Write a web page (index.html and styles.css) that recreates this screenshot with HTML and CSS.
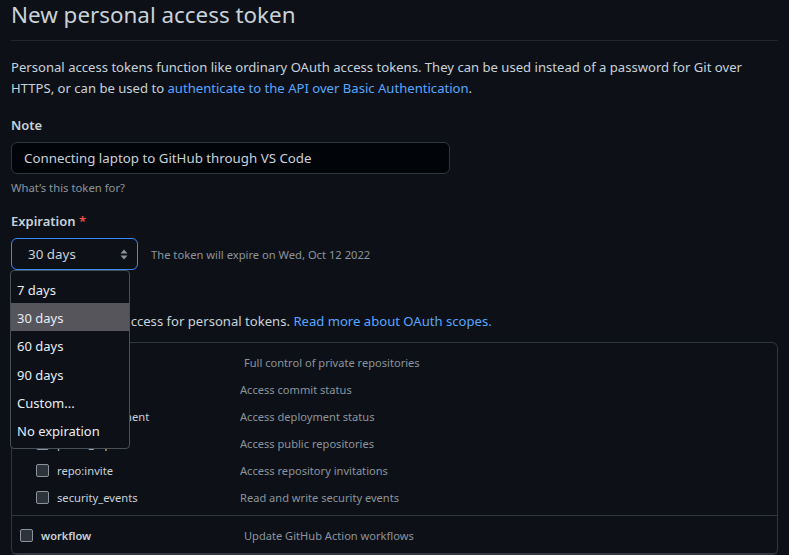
FILE: index.html
```html
<!DOCTYPE html>
<html lang="en">
<head>
<meta charset="utf-8">
<title>New personal access token</title>
<link rel="stylesheet" href="styles.css">
</head>
<body>
<main class="page">
  <div class="subhead">
    <h1 class="subhead-title">New personal access token</h1>
  </div>
  <p class="intro">Personal access tokens function like ordinary OAuth access tokens. They can be used instead of a password for Git over HTTPS, or can be used to <a class="link" href="#">authenticate to the API over Basic Authentication</a>.</p>

  <div class="field">
    <label class="field-label">Note</label>
    <div class="text-input">Connecting laptop to GitHub through VS Code</div>
    <p class="hint">What’s this token for?</p>
  </div>

  <div class="field field-expiry">
    <label class="field-label">Expiration <span class="req">*</span></label>
    <div class="expiry-row">
      <div class="select-wrap">
        <div class="select">
          <span>30 days</span>
          <svg class="select-arrows" width="8" height="11" viewBox="0 0 8 11"><path d="M4 0.5 L7.5 4.5 H0.5 Z M0.5 6.5 H7.5 L4 10.5 Z" fill="#8b949e"/></svg>
        </div>
        <ul class="dropdown">
          <li class="option">7 days</li>
          <li class="option is-active">30 days</li>
          <li class="option">60 days</li>
          <li class="option">90 days</li>
          <li class="option">Custom...</li>
          <li class="option">No expiration</li>
        </ul>
      </div>
      <span class="expiry-note">The token will expire on Wed, Oct 12 2022</span>
    </div>
  </div>

  <section class="scopes">
    <h3 class="scopes-title">Select scopes</h3>
    <p class="scopes-desc">Scopes define the access for personal tokens. <a class="link" href="#">Read more about OAuth scopes.</a></p>
    <div class="scope-box">
      <div class="scope-group">
        <div class="scope-row">
          <span class="scope-name"><span class="checkbox"></span><b>repo</b></span>
          <span class="scope-desc">Full control of private repositories</span>
        </div>
        <div class="scope-row sub">
          <span class="scope-name"><span class="checkbox"></span>repo:status</span>
          <span class="scope-desc">Access commit status</span>
        </div>
        <div class="scope-row sub">
          <span class="scope-name"><span class="checkbox"></span>repo_deployment</span>
          <span class="scope-desc">Access deployment status</span>
        </div>
        <div class="scope-row sub">
          <span class="scope-name"><span class="checkbox"></span>public_repo</span>
          <span class="scope-desc">Access public repositories</span>
        </div>
        <div class="scope-row sub">
          <span class="scope-name"><span class="checkbox"></span>repo:invite</span>
          <span class="scope-desc">Access repository invitations</span>
        </div>
        <div class="scope-row sub">
          <span class="scope-name"><span class="checkbox"></span>security_events</span>
          <span class="scope-desc">Read and write security events</span>
        </div>
      </div>
      <div class="scope-group">
        <div class="scope-row">
          <span class="scope-name"><span class="checkbox"></span><b>workflow</b></span>
          <span class="scope-desc">Update GitHub Action workflows</span>
        </div>
      </div>
    </div>
  </section>
</main>
</body>
</html>
```
FILE: styles.css
```css
* { box-sizing: border-box; }

html, body {
  margin: 0;
  padding: 0;
  background: #0d1117;
}

body {
  color: #c9d1d9;
  font-family: "Noto Sans", "Open Sans", sans-serif;
  font-size: 13.1px;
  line-height: 21px;
  overflow: hidden;
  height: 555px;
}

.page {
  padding: 0 11px;
}

.subhead {
  padding-bottom: 10px;
  border-bottom: 1px solid #21262d;
}

.subhead-title {
  margin: 0;
  font-size: 22.4px;
  line-height: 30px;
  font-weight: 400;
  color: #c9d1d9;
}

.intro {
  margin: 16px 0 16px;
}

.link {
  color: #58a6ff;
  text-decoration: none;
}

.field-label {
  display: block;
  font-weight: 600;
  font-size: 13px;
  margin-bottom: 6px;
}

.req {
  color: #f85149;
}

.text-input {
  width: 439px;
  height: 32px;
  padding: 0 12px;
  display: flex;
  align-items: center;
  background: #010409;
  border: 1px solid #30363d;
  border-radius: 6px;
  color: #c9d1d9;
  font-size: 13.3px;
}

.hint {
  margin: 5px 0 0;
  font-size: 11.3px;
  line-height: 18px;
  color: #8b949e;
}

.field-expiry {
  margin-top: 14px;
}

.expiry-row {
  display: flex;
  align-items: center;
  gap: 13px;
}

.select-wrap {
  position: relative;
}

.select {
  width: 127px;
  height: 32px;
  padding: 0 9px 0 16px;
  display: flex;
  align-items: center;
  justify-content: space-between;
  border: 1px solid #388bfd;
  border-radius: 6px;
  background: #0d1117;
  color: #c9d1d9;
  font-size: 13.4px;
}

.expiry-note {
  font-size: 11.2px;
  color: #8b949e;
}

.dropdown {
  position: absolute;
  left: -1px;
  top: 32px;
  width: 120px;
  margin: 0;
  padding: 4px 0;
  list-style: none;
  background: #0d1117;
  border: 1px solid #484f58;
  border-radius: 4px;
  z-index: 10;
}

.option {
  height: 28.2px;
  padding: 3px 0 0 6px;
  display: flex;
  align-items: center;
  font-size: 13px;
  color: #e6edf3;
}

.option.is-active {
  background: #56555b;
}

.scopes-title {
  margin: 13px 0 8px;
  font-size: 15px;
  line-height: 20px;
  font-weight: 600;
}

.scopes-desc {
  margin: 0 0 10px;
}

.scope-box {
  border: 1px solid #30363d;
  border-radius: 6px;
}

.scope-group {
  padding: 6px 8px 4px;
  border-bottom: 1px solid #30363d;
}

.scope-group:last-child {
  padding: 6px 8px 4px;
}

.scope-row {
  display: grid;
  grid-template-columns: 224px 1fr;
  align-items: center;
  height: 27px;
}

.scope-row.sub {
  padding-left: 16px;
  grid-template-columns: 204px 1fr;
}

.scope-name {
  display: flex;
  align-items: center;
  gap: 8px;
  font-size: 11.2px;
  color: #c9d1d9;
}

.scope-name b {
  font-weight: 600;
  font-size: 11px;
}

.checkbox {
  width: 13px;
  height: 13px;
  border: 1px solid #8b949e;
  border-radius: 2px;
  background: #2d333b;
  flex: none;
}

.scope-desc {
  font-size: 11.1px;
  color: #8b949e;
}
```
